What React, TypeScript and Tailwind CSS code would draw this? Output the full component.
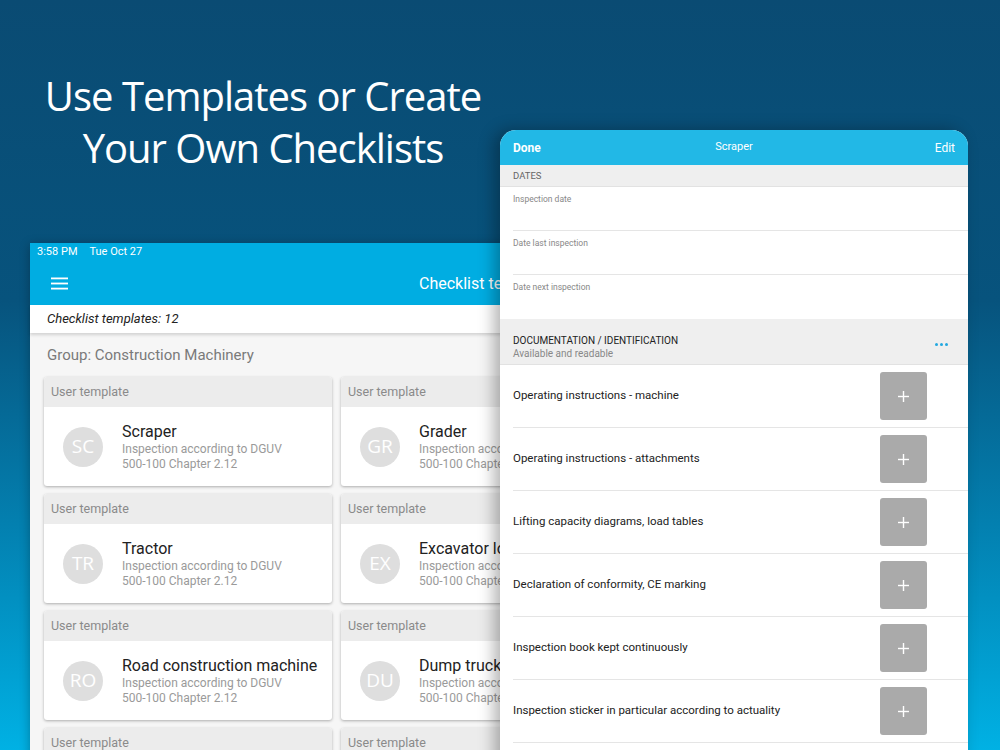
import React from "react";

const cards = [
  { initials: "SC", title: "Scraper" },
  { initials: "GR", title: "Grader" },
  { initials: "TR", title: "Tractor" },
  { initials: "EX", title: "Excavator loader" },
  { initials: "RO", title: "Road construction machine" },
  { initials: "DU", title: "Dump truck" },
  { initials: "CR", title: "Crane" },
  { initials: "FO", title: "Forklift" },
];

const dateFields = ["Inspection date", "Date last inspection", "Date next inspection"];

const checkItems = [
  "Operating instructions - machine",
  "Operating instructions - attachments",
  "Lifting capacity diagrams, load tables",
  "Declaration of conformity, CE marking",
  "Inspection book kept continuously",
  "Inspection sticker in particular according to actuality",
  "Type plate",
];

const TemplateCard: React.FC<{ initials: string; title: string }> = ({ initials, title }) => (
  <div className="h-[109px] rounded-[3px] bg-white overflow-hidden shadow-[0_1px_3px_rgba(0,0,0,0.3)]">
    <div className="h-[30px] bg-[#ececec] px-[7px] flex items-center text-[12.5px] text-[#8a8a8a]">
      User template
    </div>
    <div className="flex items-center h-[79px] pl-[19px]">
      <div className="w-[40px] h-[40px] rounded-full bg-[#dedede] flex items-center justify-center text-white text-[19px] font-['Open_Sans',sans-serif]">
        {initials}
      </div>
      <div className="ml-[19px] leading-none pt-[2px]">
        <div className="text-[16px] text-[#222] whitespace-nowrap">{title}</div>
        <div className="mt-[2px] text-[12px] leading-[14.5px] text-[#9a9a9a] whitespace-nowrap">
          Inspection according to DGUV
          <br />
          500-100 Chapter 2.12
        </div>
      </div>
    </div>
  </div>
);

export default function App() {
  return (
    <div className="relative w-[1000px] h-[750px] overflow-hidden bg-[linear-gradient(180deg,#0a4b73_0%,#07537d_40%,#0380b0_70%,#00b1e4_100%)] font-['Roboto',sans-serif]">
      <h1 className="absolute left-[0px] top-[70px] w-[526px] text-center text-white font-['Open_Sans',sans-serif] text-[40px] leading-[52px] tracking-[-1px]">
        Use Templates or Create
        <br />
        Your Own Checklists
      </h1>

      {/* left tablet screen */}
      <div className="absolute left-[30px] top-[243px] w-[920px] h-[520px] bg-[#f6f6f6] shadow-[0_2px_10px_rgba(0,0,0,0.3)]">
        <div className="h-[19px] bg-[#00ade2] flex items-center px-[7px] text-white text-[11px] gap-[12px]">
          <span>3:58 PM</span>
          <span>Tue Oct 27</span>
        </div>
        <div className="relative h-[43px] bg-[#00ade2] flex items-center px-[21px]">
          <svg width="17" height="13" viewBox="0 0 17 13" className="text-white">
            <rect x="0" y="0.5" width="17" height="1.8" fill="currentColor" />
            <rect x="0" y="5.6" width="17" height="1.8" fill="currentColor" />
            <rect x="0" y="10.7" width="17" height="1.8" fill="currentColor" />
          </svg>
          <span className="absolute left-[389px] text-white text-[16px]">Checklist templates</span>
        </div>
        <div className="relative z-10 h-[28px] bg-white flex items-center px-[17px] text-[13px] italic text-[#222] shadow-[0_2px_3px_rgba(0,0,0,0.15)]">
          Checklist templates: 12
        </div>
        <div className="px-[17px] pt-[14px] pb-[13px] text-[15px] text-[#7a7a7a] leading-[17px]">
          Group: Construction Machinery
        </div>
        <div className="grid grid-cols-[288px_288px] gap-x-[9px] gap-y-[8px] px-[14px]">
          {cards.map((c) => (
            <TemplateCard key={c.initials} initials={c.initials} title={c.title} />
          ))}
        </div>
      </div>

      {/* right detail panel */}
      <div className="absolute z-20 left-[500px] top-[130px] w-[468px] h-[640px] bg-white rounded-t-[16px] overflow-hidden shadow-[-6px_0_16px_rgba(0,0,0,0.3)]">
        <div className="relative h-[35px] bg-[#22b8e6] flex items-center justify-between px-[13px] text-white text-[12px]">
          <span className="font-bold">Done</span>
          <span className="absolute left-1/2 -translate-x-1/2 text-[11px]">Scraper</span>
          <span>Edit</span>
        </div>
        <div className="h-[22px] bg-[#efefef] flex items-center pt-[2px] px-[13px] text-[9.5px] text-[#666] border-b border-[#e2e2e2]">
          DATES
        </div>
        {dateFields.map((f, i) => (
          <div key={f} className="pl-[13px]">
            <div className={`h-[44px] pt-[6px] text-[8.5px] text-[#888] ${i < 2 ? "border-b border-[#e5e5e5]" : ""}`}>
              {f}
            </div>
          </div>
        ))}
        <div className="h-[46px] bg-[#efefef] flex items-center justify-between px-[13px] pt-[10px] border-b border-[#e2e2e2]">
          <div className="leading-[13px]">
            <div className="text-[10px] text-[#222]">DOCUMENTATION / IDENTIFICATION</div>
            <div className="text-[10px] text-[#888]">Available and readable</div>
          </div>
          <div className="flex gap-[2px] mr-[7px] -mt-[4px]">
            <span className="w-[3px] h-[3px] rounded-full bg-[#22a8e0]" />
            <span className="w-[3px] h-[3px] rounded-full bg-[#22a8e0]" />
            <span className="w-[3px] h-[3px] rounded-full bg-[#22a8e0]" />
          </div>
        </div>
        {checkItems.map((item) => (
          <div key={item} className="pl-[13px]">
            <div className="h-[63px] flex items-center justify-between border-b border-[#e5e5e5] pr-[41px]">
              <span className="text-[11.5px] text-[#222]">{item}</span>
              <div className="w-[47px] h-[48px] rounded-[3px] bg-[#aaaaaa] flex items-center justify-center">
                <svg width="11" height="11" viewBox="0 0 11 11">
                  <rect x="4.8" y="0" width="1.4" height="11" fill="white" />
                  <rect x="0" y="4.8" width="11" height="1.4" fill="white" />
                </svg>
              </div>
            </div>
          </div>
        ))}
      </div>
    </div>
  );
}
